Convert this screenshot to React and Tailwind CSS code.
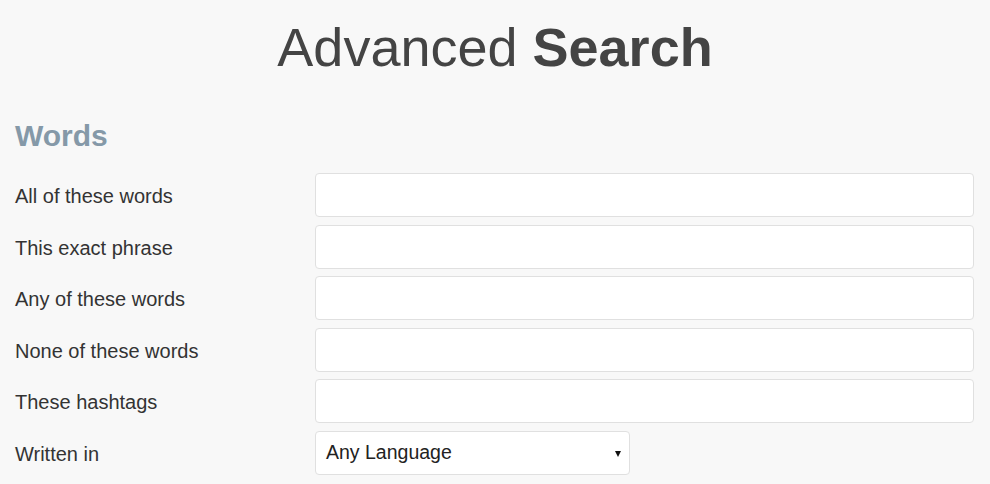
import React from "react";

const rows = [
  "All of these words",
  "This exact phrase",
  "Any of these words",
  "None of these words",
  "These hashtags",
];

export default function App() {
  return (
    <div className="min-h-[484px] w-full bg-[#f8f8f8] font-['Liberation_Sans',Arial,sans-serif] text-[#333]">
      <h1 className="pt-[17px] text-center text-[54px] leading-[60px] text-[#444] font-normal">
        Advanced <b className="font-bold">Search</b>
      </h1>
      <div className="px-[15px] pr-[16px]">
        <h2 className="mt-[41px] text-[30px] leading-[36px] font-bold text-[#8599a8]">Words</h2>
        <div className="mt-[19px] flex flex-col gap-[7.6px]">
          {rows.map((r) => (
            <div key={r} className="grid grid-cols-[300px_1fr] items-center">
              <label className="text-[20px] leading-[24px] pt-[2px]">{r}</label>
              <input
                type="text"
                className="h-[44px] w-full rounded-[4px] border border-[#e0e0e0] bg-white px-3 outline-none"
              />
            </div>
          ))}
          <div className="grid grid-cols-[300px_1fr] items-center">
            <label className="text-[20px] leading-[24px] pt-[2px]">Written in</label>
            <div className="relative flex h-[44px] w-[315px] items-center rounded-[4px] border border-[#e0e0e0] bg-white pl-[10px]">
              <span className="text-[19.5px] text-[#222]">Any Language</span>
              <svg
                className="absolute right-[8px] top-[19px]"
                width="6"
                height="6"
                viewBox="0 0 6 6"
              >
                <path d="M0 0 H6 L3 6 Z" fill="#111" />
              </svg>
            </div>
          </div>
        </div>
      </div>
    </div>
  );
}
